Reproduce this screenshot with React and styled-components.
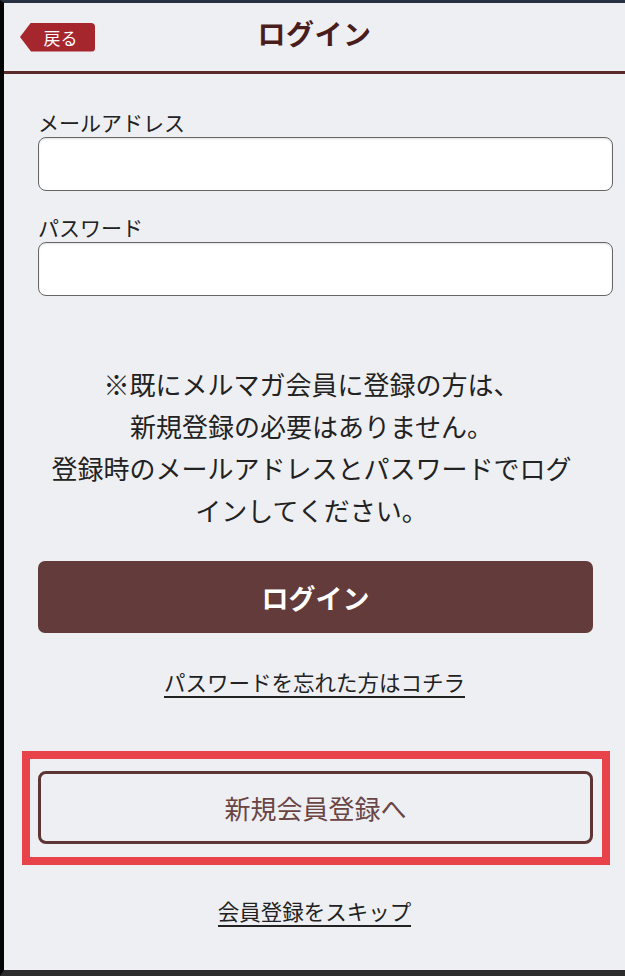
import React from 'react';
import styled, { createGlobalStyle } from 'styled-components';

const GlobalStyle = createGlobalStyle`
  html, body {
    margin: 0;
    padding: 0;
    background: #2c2c2c;
  }
  body {
    font-family: "Noto Sans CJK JP", "Noto Sans", sans-serif;
    color: #222;
  }
`;

// Styles
const Screen = styled.div`
  width: 625px;
  height: 976px;
  box-sizing: border-box;
  border-top: 3px solid #283044;
  border-left: 4px solid #050505;
  border-bottom: 6px solid #2c2c2c;
  background: #eeeff3;
  display: flex;
  flex-direction: column;
`;

const Header = styled.header`
  height: 68px;
  border-bottom: 3px solid #5a2a2a;
  display: grid;
  grid-template-columns: 1fr auto 1fr;
  align-items: center;
  padding: 0 16px;
`;

const BackButton = styled.button`
  justify-self: start;
  width: 75px;
  height: 29px;
  border: none;
  border-radius: 0 4px 4px 0;
  clip-path: polygon(11px 0, 100% 0, 100% 100%, 11px 100%, 0 50%);
  background: #a6262d;
  color: #fff;
  font-family: inherit;
  font-size: 17px;
  line-height: 29px;
  padding: 0 0 0 6px;
`;

const Title = styled.h1`
  margin: 0 0 8px;
  font-size: 28px;
  font-weight: 700;
  color: #4a1d1d;
  letter-spacing: 0.5px;
`;

const Main = styled.main`
  padding: 34px 12px 0 34px;
  display: flex;
  flex-direction: column;
`;

const Label = styled.label`
  font-size: 21px;
  line-height: 28px;
  color: #222;
  margin-top: ${p => p.$gap || 0}px;
`;

const Input = styled.input`
  margin-top: 1px;
  height: 54px;
  box-sizing: border-box;
  border: 1.5px solid #666;
  border-radius: 8px;
  background: #fff;
  box-shadow: inset 0 1px 2px rgba(0, 0, 0, 0.12);
`;

const Note = styled.p`
  margin: 67px auto 0;
  width: 532px;
  font-size: 26px;
  line-height: 42px;
  text-align: center;
  color: #222;
  transform: translateX(-14px);
`;

const PrimaryButton = styled.button`
  margin-top: 30px;
  margin-right: 20px;
  height: 72px;
  border: none;
  border-radius: 7px;
  background: #623b3a;
  color: #fff;
  font-family: inherit;
  font-size: 27px;
  font-weight: 700;
`;

const TextLink = styled.a`
  align-self: center;
  margin-top: ${p => p.$gap}px;
  margin-right: 22px;
  font-size: 21.5px;
  line-height: 28px;
  color: #222;
  text-decoration: none;
  border-bottom: 2px solid #222;
`;

const Highlight = styled.div`
  margin: 53px 3px 0 -16px;
  border: 8px solid #e8434b;
  padding: 12px 9px 13px 8px;
  display: flex;
  flex-direction: column;
`;

const OutlineButton = styled.button`
  height: 73px;
  border: 3px solid #5d3534;
  border-radius: 8px;
  background: transparent;
  color: #6a4443;
  font-family: inherit;
  font-size: 26px;
`;

const App = () => {
  return (
    <>
      <GlobalStyle />
      <Screen>
        <Header>
          <BackButton>戻る</BackButton>
          <Title>ログイン</Title>
          <span />
        </Header>
        <Main>
          <Label>メールアドレス</Label>
          <Input type="email" />
          <Label $gap={22}>パスワード</Label>
          <Input type="password" />
          <Note>
            ※既にメルマガ会員に登録の方は、
            <br />
            新規登録の必要はありません。
            <br />
            登録時のメールアドレスとパスワードでログインしてください。
          </Note>
          <PrimaryButton>ログイン</PrimaryButton>
          <TextLink href="#" $gap={35}>パスワードを忘れた方はコチラ</TextLink>
          <Highlight>
            <OutlineButton>新規会員登録へ</OutlineButton>
          </Highlight>
          <TextLink href="#" $gap={32}>会員登録をスキップ</TextLink>
        </Main>
      </Screen>
    </>
  );
};

export default App;
